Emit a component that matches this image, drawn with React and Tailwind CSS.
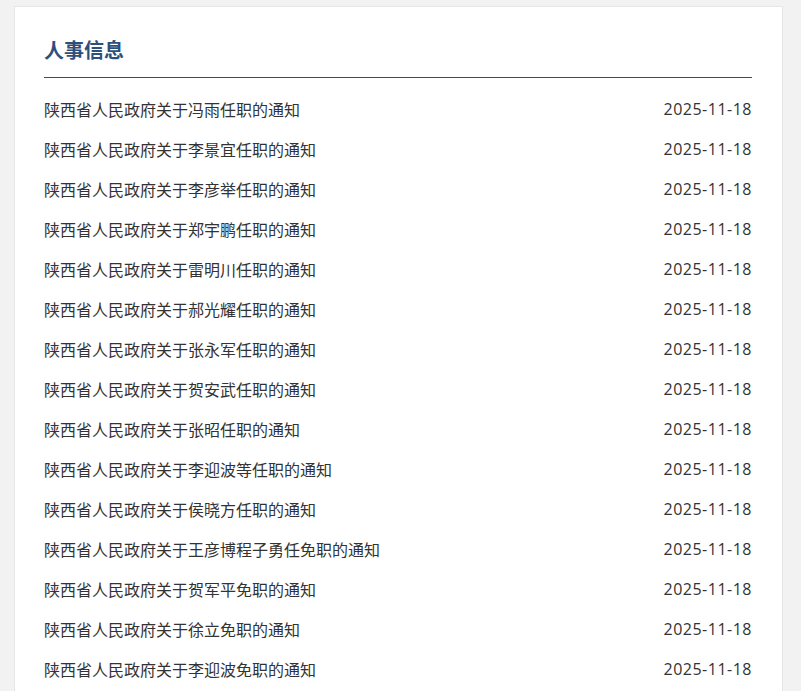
const items = [
  '陕西省人民政府关于冯雨任职的通知',
  '陕西省人民政府关于李景宜任职的通知',
  '陕西省人民政府关于李彦举任职的通知',
  '陕西省人民政府关于郑宇鹏任职的通知',
  '陕西省人民政府关于雷明川任职的通知',
  '陕西省人民政府关于郝光耀任职的通知',
  '陕西省人民政府关于张永军任职的通知',
  '陕西省人民政府关于贺安武任职的通知',
  '陕西省人民政府关于张昭任职的通知',
  '陕西省人民政府关于李迎波等任职的通知',
  '陕西省人民政府关于侯晓方任职的通知',
  '陕西省人民政府关于王彦博程子勇任免职的通知',
  '陕西省人民政府关于贺军平免职的通知',
  '陕西省人民政府关于徐立免职的通知',
  '陕西省人民政府关于李迎波免职的通知',
];

export default function App() {
  return (
    <div
      className="min-h-screen bg-[#f2f2f2] pt-[6px] pl-[14px] pr-[18px]"
      style={{ fontFamily: '"Microsoft YaHei", "Noto Sans CJK SC", "Noto Sans", sans-serif' }}
    >
      <div className="bg-white border border-[#e6e6e6] pl-[29px] pr-[30px] pt-[29px] pb-6">
        <div className="border-b border-[#2d4f7c] pb-[13px]">
          <h2 className="text-[20px] leading-[28px] font-bold text-[#2d4f7c]">人事信息</h2>
        </div>
        <ul className="mt-[11px]">
          {items.map((t, i) => (
            <li key={i} className="flex justify-between items-center h-10 text-[16px] text-[#333]">
              <a className="truncate">{t}</a>
              <span className="shrink-0 ml-4 tracking-[0.5px]" style={{ fontFamily: '"Open Sans", "Noto Sans", sans-serif' }}>2025-11-18</span>
            </li>
          ))}
        </ul>
      </div>
    </div>
  );
}
